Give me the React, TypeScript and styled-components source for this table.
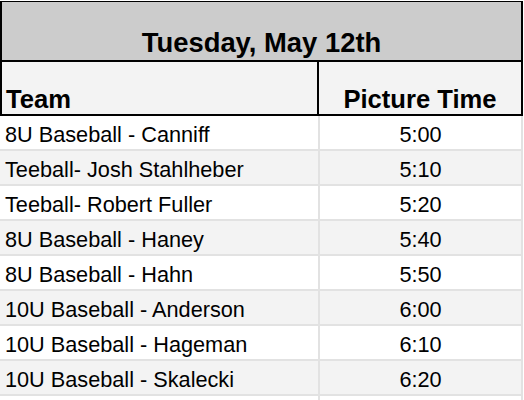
import React from 'react'
import styled, { createGlobalStyle } from 'styled-components'

const GlobalStyle = createGlobalStyle`
  body {
    margin: 0;
    background: #ffffff;
    font-family: 'Liberation Sans', Arial, Helvetica, sans-serif;
    color: #000000;
  }
`

interface Slot {
  team: string
  time: string
}

const slots: Slot[] = [
  { team: '8U Baseball - Canniff', time: '5:00' },
  { team: 'Teeball- Josh Stahlheber', time: '5:10' },
  { team: 'Teeball- Robert Fuller', time: '5:20' },
  { team: '8U Baseball - Haney', time: '5:40' },
  { team: '8U Baseball - Hahn', time: '5:50' },
  { team: '10U Baseball - Anderson', time: '6:00' },
  { team: '10U Baseball - Hageman', time: '6:10' },
  { team: '10U Baseball - Skalecki', time: '6:20' },
  { team: '', time: '' },
]

const App: React.FC = () => {
  return (
    <>
      <GlobalStyle />
      <StyledSheet>
        <StyledHeader>
          <StyledTitle>Tuesday, May 12th</StyledTitle>
          <StyledHeadRow>
            <StyledHeadCell>Team</StyledHeadCell>
            <StyledHeadCell $center>Picture Time</StyledHeadCell>
          </StyledHeadRow>
        </StyledHeader>
        {slots.map((slot, i) => (
          <StyledRow key={i} $shaded={i % 2 === 1}>
            <StyledTeamCell>{slot.team}</StyledTeamCell>
            <StyledTimeCell>{slot.time}</StyledTimeCell>
          </StyledRow>
        ))}
      </StyledSheet>
    </>
  )
}

const StyledSheet = styled.div`
  width: 523px;
  height: 400px;
  overflow: hidden;
  display: flex;
  flex-direction: column;
`

const StyledHeader = styled.div`
  flex-shrink: 0;
  margin-top: 1px;
  border: 2px solid #000000;
  border-top-width: 1px;
  display: flex;
  flex-direction: column;
`

const StyledTitle = styled.div`
  height: 60px;
  box-sizing: border-box;
  background: #cccccc;
  border-bottom: 2px solid #000000;
  display: flex;
  align-items: flex-end;
  justify-content: center;
  padding-bottom: 2px;
  font-size: 27.4px;
  line-height: 30px;
  font-weight: bold;
`

const StyledHeadRow = styled.div`
  height: 52px;
  display: grid;
  grid-template-columns: 315px 1fr;
  background: #f3f3f3;
`

const StyledHeadCell = styled.div<{ $center?: boolean }>`
  display: flex;
  align-items: flex-end;
  justify-content: ${(p) => (p.$center ? 'center' : 'flex-start')};
  padding: 0 0 1px ${(p) => (p.$center ? '0' : '4px')};
  font-size: 25.6px;
  line-height: 28px;
  font-weight: bold;
  & + & {
    border-left: 2px solid #000000;
  }
`

const StyledRow = styled.div<{ $shaded: boolean }>`
  flex-shrink: 0;
  height: 35px;
  box-sizing: border-box;
  display: grid;
  grid-template-columns: 318px 1fr;
  background: ${(p) => (p.$shaded ? '#f3f3f3' : '#ffffff')};
  border-bottom: 2px solid #e2e2e2;
  font-size: 21.7px;
  line-height: 24px;
`

const StyledTeamCell = styled.div`
  display: flex;
  align-items: flex-end;
  padding: 0 0 2px 5px;
  white-space: nowrap;
`

const StyledTimeCell = styled.div`
  display: flex;
  align-items: flex-end;
  justify-content: center;
  padding-bottom: 2px;
  border-left: 2px solid #e2e2e2;
  border-right: 2px solid #e2e2e2;
`

export default App
